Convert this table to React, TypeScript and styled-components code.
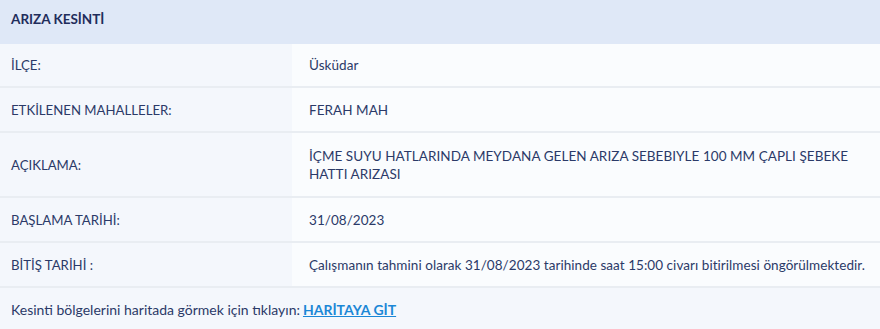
import React from "react";
import styled, { createGlobalStyle } from "styled-components";

const Global = createGlobalStyle`
  html, body { margin: 0; padding: 0; background: #f6f8fc; }
  body { font-family: "Lato", "Noto Sans", sans-serif; }
`;

const Card = styled.section`
  width: 880px;
  background: #f6f8fc;
  color: #2b3a68;
  font-size: 13.5px;
`;

const Header = styled.div`
  height: 44px;
  box-sizing: border-box;
  padding: 11px 11px 0;
  background: #dfe8f7;
  color: #1f2d5c;
  font-weight: 700;
  font-size: 13.5px;
  line-height: 16px;
`;

const Row = styled.div<{ $h: number }>`
  display: grid;
  grid-template-columns: 292px 1fr;
  height: ${(p) => p.$h}px;
  border-bottom: 2px solid #e9edf2;
`;

const Label = styled.div`
  display: flex;
  align-items: center;
  padding-left: 11px;
  background: #f4f7fc;
  font-size: 13.2px;
`;

const Value = styled.div`
  display: flex;
  align-items: center;
  padding: 0 14px 0 17px;
  background: #fafcfe;
  line-height: 18px;
  letter-spacing: 0.05px;
`;

const Footer = styled.div`
  height: 42px;
  display: flex;
  align-items: center;
  padding-left: 11px;
  background: #f4f7fc;
  font-size: 14px;
`;

const Link = styled.a`
  margin-left: 3px;
  color: #1b87d6;
  font-weight: 700;
  text-decoration: underline;
  cursor: pointer;
`;

const rows: { label: string; value: string; h: number }[] = [
  { label: "İLÇE:", value: "Üsküdar", h: 42 },
  { label: "ETKİLENEN MAHALLELER:", value: "FERAH MAH", h: 43 },
  {
    label: "AÇIKLAMA:",
    value:
      "İÇME SUYU HATLARINDA MEYDANA GELEN ARIZA SEBEBIYLE 100 MM ÇAPLI ŞEBEKE HATTI ARIZASI",
    h: 63,
  },
  { label: "BAŞLAMA TARİHİ:", value: "31/08/2023", h: 43 },
  {
    label: "BİTİŞ TARİHİ :",
    value:
      "Çalışmanın tahmini olarak 31/08/2023 tarihinde saat 15:00 civarı bitirilmesi öngörülmektedir.",
    h: 43,
  },
];

export default function App() {
  return (
    <>
      <Global />
      <Card>
        <Header>ARIZA KESİNTİ</Header>
        {rows.map((r) => (
          <Row key={r.label} $h={r.h}>
            <Label>{r.label}</Label>
            <Value>{r.value}</Value>
          </Row>
        ))}
        <Footer>
          Kesinti bölgelerini haritada görmek için tıklayın:
          <Link>HARİTAYA GİT</Link>
        </Footer>
      </Card>
    </>
  );
}
